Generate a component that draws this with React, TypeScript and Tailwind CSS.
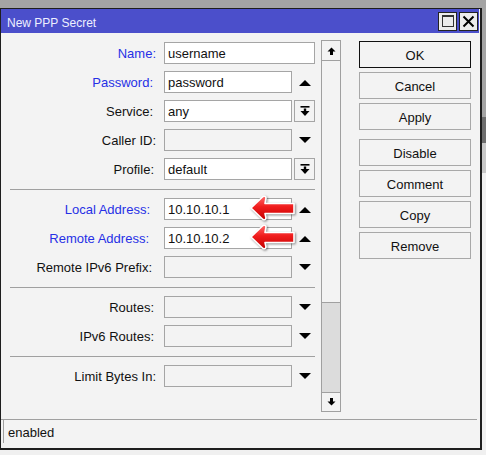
import React from "react";

const UpTri = () => (
  <svg width="12" height="7" viewBox="0 0 12 7" className="mt-[3px]">
    <polygon points="0,6 6,0 12,6" fill="#000" />
  </svg>
);
const DownTri = () => (
  <svg width="12" height="7" viewBox="0 0 12 7">
    <polygon points="0,0 12,0 6,6" fill="#000" />
  </svg>
);
const DropBtn = () => (
  <div className="ml-[2px] w-[21px] h-[22px] border border-[#a5a5a5] bg-[#f3f3f3] flex items-center justify-center">
    <svg width="10" height="11" viewBox="0 0 10 11">
      <rect x="0.5" y="0" width="9" height="1.6" fill="#000" />
      <rect x="3.8" y="2.5" width="2.4" height="3" fill="#000" />
      <polygon points="0.5,5 9.5,5 5,10" fill="#000" />
    </svg>
  </div>
);

const RedArrow = ({ id }: { id: string }) => (
  <svg
    width="48"
    height="28"
    viewBox="0 0 48 28"
    className="absolute left-[84px] top-[-4px] drop-shadow-[1px_1px_1px_rgba(0,0,0,0.45)]"
  >
    <defs>
      <linearGradient id={id} x1="0" y1="0" x2="0" y2="1">
        <stop offset="0" stopColor="#ff6a6a" />
        <stop offset="0.45" stopColor="#f01c1c" />
        <stop offset="1" stopColor="#c40000" />
      </linearGradient>
    </defs>
    <path
      d="M2,13 L14,1.5 Q16.5,0.5 17,3 L16,8.5 L45,8.5 L45,18.5 L16,18.5 L17,23 Q16.5,25.5 14,24.5 Z"
      fill={`url(#${id})`}
      stroke="#fff"
      strokeWidth="1.6"
      strokeLinejoin="round"
    />
  </svg>
);

type Row = {
  label: string;
  blue?: boolean;
  value?: string;
  enabled?: boolean;
  widget: "none" | "up" | "down" | "drop";
  pr: string;
  arrow?: string;
};

const sections: Row[][] = [
  [
    { label: "Name:", blue: true, value: "username", enabled: true, widget: "none", pr: "pr-[0px]" },
    { label: "Password:", blue: true, value: "password", enabled: true, widget: "up", pr: "pr-[3px]" },
    { label: "Service:", value: "any", enabled: true, widget: "drop", pr: "pr-[3px]" },
    { label: "Caller ID:", widget: "down", pr: "pr-[0px]" },
    { label: "Profile:", value: "default", enabled: true, widget: "drop", pr: "pr-[2px]" },
  ],
  [
    { label: "Local Address:", blue: true, value: "10.10.10.1", enabled: true, widget: "up", pr: "pr-[6px]", arrow: "ra1" },
    { label: "Remote Address:", blue: true, value: "10.10.10.2", enabled: true, widget: "up", pr: "pr-[7px]", arrow: "ra2" },
    { label: "Remote IPv6 Prefix:", widget: "down", pr: "pr-[4px]" },
  ],
  [
    { label: "Routes:", widget: "down", pr: "pr-[2px]" },
    { label: "IPv6 Routes:", widget: "down", pr: "pr-[2px]" },
  ],
  [{ label: "Limit Bytes In:", widget: "down", pr: "pr-[0px]" }],
];

const FormRow = ({ r }: { r: Row }) => (
  <div className="flex items-center h-[22px]">
    <div
      className={`w-[155px] text-right whitespace-nowrap ${r.pr} ${
        r.blue ? "text-[#2630e6]" : "text-[#111]"
      }`}
    >
      {r.label}
    </div>
    <div
      className={`relative ml-[8px] h-[22px] border border-[#a5a5a5] pl-[3px] flex items-center text-[#111] ${
        r.widget === "none" ? "w-[151px]" : "w-[128px]"
      } ${r.enabled ? "bg-white" : "bg-[#f3f3f3]"}`}
    >
      {r.value ?? ""}
      {r.arrow && <RedArrow id={r.arrow} />}
    </div>
    {r.widget === "drop" && <DropBtn />}
    {(r.widget === "up" || r.widget === "down") && (
      <div className="w-[23px] h-[22px] pl-[7px] flex items-center">
        {r.widget === "up" ? <UpTri /> : <DownTri />}
      </div>
    )}
  </div>
);

const Btn = ({ label, def, extra }: { label: string; def?: boolean; extra?: string }) => (
  <div
    className={`h-[27px] w-[112px] border ${
      def ? "border-[#111]" : "border-[#a8a8a8]"
    } bg-[#f3f3f3] flex items-center justify-center pt-px text-[#111] ${extra ?? ""}`}
  >
    {label}
  </div>
);

export default function App() {
  return (
    <div className="w-[486px] h-[455px] bg-[#a4a4a4] flex overflow-hidden font-['Liberation_Sans',Arial,sans-serif] text-[13px] leading-none">
      <div className="flex flex-col w-[482px]">
        <div className="mt-[8px] w-[482px] h-[442px] border-t border-l border-r-2 border-b-2 border-[#1e1e1e] bg-[#f3f3f3] flex flex-col">
          {/* title bar */}
          <div className="h-[24px] mr-[1px] bg-[#4b4fcb] flex items-center justify-between">
            <span className="ml-[6px] mt-[3px] text-[12px] text-[#eef0ff]">New PPP Secret</span>
            <div className="flex gap-[2px] mr-[1px]">
              <div className="w-[19px] h-[19px] border border-[#222] bg-[#ececec] flex items-center justify-center">
                <div className="w-[12px] h-[12px] border border-[#333] border-t-2" />
              </div>
              <div className="w-[19px] h-[19px] border border-[#222] bg-[#ececec] flex items-center justify-center">
                <svg width="13" height="13" viewBox="0 0 13 13">
                  <path d="M1.5,1.5 L11.5,11.5 M11.5,1.5 L1.5,11.5" stroke="#000" strokeWidth="2" />
                </svg>
              </div>
            </div>
          </div>

          {/* main */}
          <div className="h-[386px] flex">
            <div className="w-[314px] pt-[9px] flex flex-col">
              {sections.map((sec, si) => (
                <React.Fragment key={si}>
                  {si > 0 && <div className="ml-[9px] w-[305px] h-px bg-[#a0a0a0] mt-[9px] mb-[8px]" />}
                  <div className="flex flex-col gap-[7px]">
                    {sec.map((r) => (
                      <FormRow key={r.label} r={r} />
                    ))}
                  </div>
                </React.Fragment>
              ))}
            </div>

            {/* scrollbar */}
            <div className="ml-[6px] mt-[7px] w-[20px] h-[372px] flex flex-col">
              <div className="h-[21px] border border-[#a0a0a0] bg-[#f3f3f3] flex items-center justify-center">
                <svg width="9" height="8" viewBox="0 0 9 8">
                  <polygon points="0.5,4.5 4.5,0.5 8.5,4.5" fill="#000" />
                  <rect x="3" y="4" width="3" height="4" fill="#000" />
                </svg>
              </div>
              <div className="h-[242px] border-x border-b border-[#a0a0a0] bg-[#f3f3f3]" />
              <div className="flex-1 border-x border-[#a0a0a0] bg-[#dcdcdc]" />
              <div className="h-[20px] border border-[#a0a0a0] bg-[#f3f3f3] flex items-center justify-center">
                <svg width="9" height="8" viewBox="0 0 9 8">
                  <rect x="3" y="0" width="3" height="4" fill="#000" />
                  <polygon points="0.5,3.5 8.5,3.5 4.5,7.5" fill="#000" />
                </svg>
              </div>
            </div>

            {/* buttons */}
            <div className="ml-[18px] mt-[8px] flex flex-col gap-[4px]">
              <Btn label="OK" def />
              <Btn label="Cancel" />
              <Btn label="Apply" />
              <Btn label="Disable" extra="mt-[5px]" />
              <Btn label="Comment" />
              <Btn label="Copy" />
              <Btn label="Remove" />
            </div>
          </div>

          {/* status */}
          <div className="mr-[3px] h-px bg-[#a0a0a0]" />
          <div className="flex-1 flex flex-col">
            <div className="ml-[2px] mr-[4px] h-[23px] border-l border-[#a0a0a0] flex items-center pl-[4px] pt-px text-[#111]">
              enabled
            </div>
          </div>
        </div>
        <div className="flex-1 bg-[#f0f0f0]" />
      </div>
      <div className="w-[4px] flex flex-col">
        <div className="h-[117px] bg-[#a4a4a4]" />
        <div className="h-[26px] bg-[#6e6e6e]" />
        <div className="h-[30px] bg-[#c8c8c8]" />
        <div className="flex-1 bg-[#f0f0f0]" />
      </div>
    </div>
  );
}
